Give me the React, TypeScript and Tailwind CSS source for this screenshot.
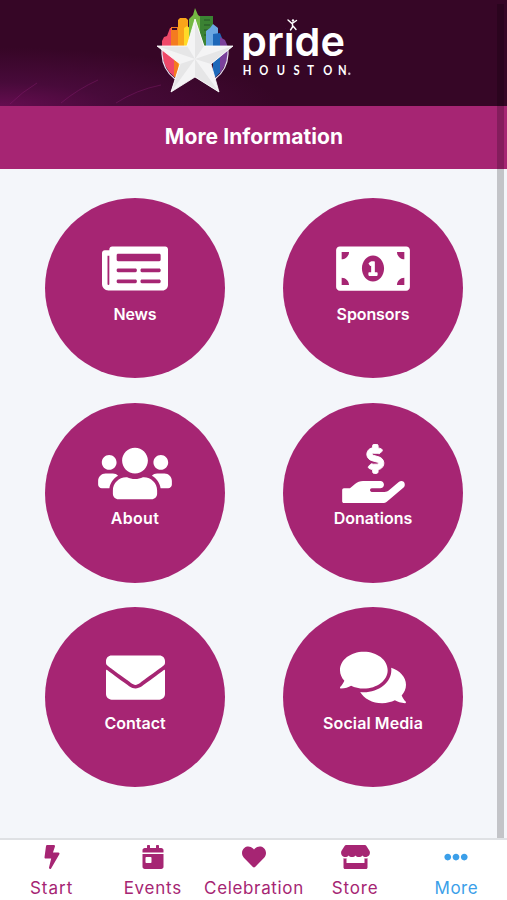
import React, { FC, ReactNode } from 'react';
import {
    FaBolt,
    FaCalendarDay,
    FaComments,
    FaEllipsisH,
    FaEnvelope,
    FaHeart,
    FaMoneyBillAlt,
    FaNewspaper,
    FaStore,
    FaUsers,
} from 'react-icons/fa';

interface InfoButtonProps {
    label: string;
    labelClass: string;
    icon: ReactNode;
}

interface NavItemProps {
    label: string;
    labelClass: string;
    icon: ReactNode;
    active?: boolean;
}

const HandIcon: FC = () => (
    <svg viewBox="0 0 544 512" className="h-[59px] w-[63px]" fill="currentColor">
        <path
            d="M257.6 144.3l50 14.3c3.6 1 6.1 4.4 6.1 8.1 0 4.6-3.8 8.4-8.4 8.4h-32.8c-3.6 0-7.1-.8-10.3-2.2-4.8-2.2-10.4-1.7-14.1 2l-17.5 17.5c-5.3 5.3-4.7 14.3 1.5 18.4 9.5 6.3 20.3 10.1 31.8 11.5V240c0 8.8 7.2 16 16 16h16c8.8 0 16-7.2 16-16v-17.6c30.3-3.6 53.3-31 49.3-63-2.9-23-20.7-41.3-42.9-47.7l-50-14.3c-3.6-1-6.1-4.4-6.1-8.1 0-4.6 3.8-8.4 8.4-8.4h32.8c3.6 0 7.1.8 10.3 2.2 4.8 2.2 10.4 1.7 14.1-2l17.5-17.5c5.3-5.3 4.7-14.3-1.5-18.4-9.5-6.3-20.3-10.1-31.8-11.5V16c0-8.8-7.2-16-16-16h-16c-8.8 0-16 7.2-16 16v17.6c-30.3 3.6-53.3 31-49.3 63 2.9 23 20.7 41.3 42.9 47.7z"
            stroke="currentColor"
            strokeWidth="8"
        />
        <path d="M533.9 328.1c-11.2-10.7-28.5-10-40.3 0L406.4 402c-10.7 9.1-24 14-37.8 14H256.9c-8.3 0-15.1-7.2-15.1-16s6.8-16 15.1-16h73.9c15.1 0 29-10.9 31.4-26.6 3.1-20-11.5-37.4-29.8-37.4H181.3c-25.5 0-50.2 9.3-69.9 26.4L67.5 384H15.1C6.8 384 0 391.2 0 400v96c0 8.8 6.8 16 15.1 16H352c13.7 0 27-4.9 37.8-14L533 376.8c13.1-11.1 14.7-33.6.9-48.7z" />
    </svg>
);

const Logo: FC = () => (
    <svg viewBox="0 0 507 106" className="h-[106px] w-[507px]">
        <defs>
            <radialGradient id="glow" cx="0" cy="1" r="0.55">
                <stop offset="0" stopColor="#650d50" />
                <stop offset="0.4" stopColor="#480a3a" />
                <stop offset="1" stopColor="#360626" />
            </radialGradient>
            <clipPath id="disc">
                <path d="M150 0H240V48H228A33 33 0 0 1 162 54V48H150Z" />
            </clipPath>
            <clipPath id="wordmark">
                <path d="M236 28H360V60H236Z" />
            </clipPath>
        </defs>
        <rect width="507" height="106" fill="url(#glow)" />
        <g stroke="#8d1d73" strokeWidth="0.8" fill="none" opacity="0.5">
            <path d="M10 104Q22 92 37 83" />
            <path d="M61 103Q78 89 98 80" />
            <path d="M116 103Q136 90 161 85" />
        </g>

        {/* skyline */}
        <g clipPath="url(#disc)">
            <path d="M162 79V41L164 37L167 36L170 28H174V79Z" fill="#ef4869" />
            <path d="M171 48V27H179V79H174V48Z" fill="#f47b20" />
            <path d="M178 70V20L180 18H186L188 20V70Z" fill="#faa41a" />
            <path d="M184 60V28L187 26L190 28V60Z" fill="#ffda27" />
            <path d="M189 50V19L193 15L195 8L198 15L201 17V50Z" fill="#74b843" />
            <path d="M200 16H213V50H200Z" fill="#3b8233" />
            <path d="M204 20H210M204 25H210M204 30H210M204 35H210" stroke="#245326" strokeWidth="1" />
            <path d="M206 46V31L210 28L213 24L218 28V46Z" fill="#6aa8e2" />
            <path d="M213 79V34L220 33L222 38V79Z" fill="#1d68b9" />
            <path d="M220 79V37L225 40L228 47V79Z" fill="#7b419b" />
        </g>
        <path d="M172 28H177V30H172Z" fill="#360626" />
        <path d="M162 48V54A33 33 0 0 0 175 79M228 48V54A33 33 0 0 1 215 79" stroke="#eadff0" strokeWidth="1.2" fill="none" />

        {/* star */}
        <path d="M195 19L204 46H233L211 64L219 92L195 77L171 92L180 64L157 46H187Z" fill="#f4f4f5" />
        <path
            d="M195 59L195 19L204 46ZM195 59L233 46L211 64ZM195 59L219 92L195 77ZM195 59L171 92L180 64ZM195 59L157 46L187 46Z"
            fill="#e6e6e7"
        />
        <path d="M195 19L204 46H233L211 64L219 92L195 77L171 92L180 64L157 46H187Z" stroke="#fff" strokeWidth="0.8" fill="none" />

        {/* word mark */}
        <g clipPath="url(#wordmark)">
            <text
                x="241"
                y="55.5"
                fill="#fff"
                fontSize="42"
                textLength="104"
                lengthAdjust="spacingAndGlyphs"
                className="font-['Inter',sans-serif] font-semibold"
            >
                pride
            </text>
        </g>
        <rect x="286" y="20" width="14" height="12.5" fill="#360626" />
        <path
            d="M288 20L292 23.5L296.5 20.5M292.5 23V27L290.5 30M293 26L296 29.5"
            stroke="#fff"
            strokeWidth="1.4"
            fill="none"
            strokeLinecap="round"
        />
        <circle cx="293" cy="20.5" r="1.2" fill="#fff" />
        <text
            x="303.5 324 346 367 384 404 422.5"
            y="75"
            fill="#fff"
            fontSize="14"
            transform="scale(0.8 1)"
            className="font-['Lato',sans-serif] font-bold"
        >
            HOUSTON
        </text>
        <circle cx="349.3" cy="73.7" r="1.2" fill="#c9b8c6" />
    </svg>
);

const InfoButton: FC<InfoButtonProps> = ({ label, labelClass, icon }) => (
    <button className="flex size-[180px] flex-col items-center rounded-full bg-[#a62573] pt-[41px] text-white">
        <span className="flex h-[59px] items-center justify-center text-[59px]">{icon}</span>
        <span className={`mt-[3.5px] text-base leading-6 font-[560] whitespace-nowrap ${labelClass}`}>{label}</span>
    </button>
);

const NavItem: FC<NavItemProps> = ({ label, labelClass, icon, active }) => (
    <button className={`flex w-1/5 flex-col items-center pt-1 ${active ? 'text-[#3b9fe9]' : 'text-[#a62573]'}`}>
        <span className="flex h-[25px] items-center text-[24px]">{icon}</span>
        <span className={`mt-[7px] text-[17px] leading-6 font-[380] whitespace-nowrap ${labelClass}`}>{label}</span>
    </button>
);

const App: FC = () => {
    return (
        <div className="relative flex h-[900px] w-[507px] flex-col overflow-hidden bg-[#f4f6fa] font-['Inter',sans-serif]">
            <header className="h-[106px] shrink-0">
                <Logo />
            </header>
            <div className="flex h-[63px] shrink-0 items-center justify-center bg-[#a62573] pb-[2px] pl-[1px]">
                <h1 className="text-[21px] leading-7 font-bold tracking-[0.08px] text-white">More Information</h1>
            </div>
            <main className="grid h-[669px] shrink-0 grid-cols-[180px_180px] content-start gap-x-[58px] gap-y-[24.6px] pt-[29px] pl-[45px]">
                <InfoButton label="News" labelClass="tracking-[-0.2px]" icon={<FaNewspaper className="h-[59px] w-[66px]" />} />
                <InfoButton label="Sponsors" labelClass="tracking-[-0.1px]" icon={<FaMoneyBillAlt className="h-[59px] w-[74px]" />} />
                <InfoButton label="About" labelClass="tracking-[0.3px]" icon={<FaUsers className="h-[59px] w-[74px]" />} />
                <InfoButton label="Donations" labelClass="tracking-normal" icon={<HandIcon />} />
                <InfoButton label="Contact" labelClass="tracking-normal" icon={<FaEnvelope />} />
                <InfoButton label="Social Media" labelClass="tracking-[0.1px]" icon={<FaComments className="h-[59px] w-[66px]" />} />
            </main>
            <nav className="flex h-[62px] shrink-0 border-t-2 border-[#dfe1e4] bg-white pl-[1px]">
                <NavItem label="Start" labelClass="tracking-[1px]" icon={<FaBolt />} />
                <NavItem label="Events" labelClass="tracking-[0.75px]" icon={<FaCalendarDay />} />
                <NavItem label="Celebration" labelClass="tracking-[0.65px]" icon={<FaHeart />} />
                <NavItem label="Store" labelClass="tracking-[0.9px]" icon={<FaStore className="h-[24px] w-[29px]" />} />
                <NavItem label="More" labelClass="tracking-[0.5px]" icon={<FaEllipsisH />} active />
            </nav>
            <div className="absolute top-1 right-[3px] h-[834px] w-[7px] bg-black/20" />
        </div>
    );
};

export default App;
